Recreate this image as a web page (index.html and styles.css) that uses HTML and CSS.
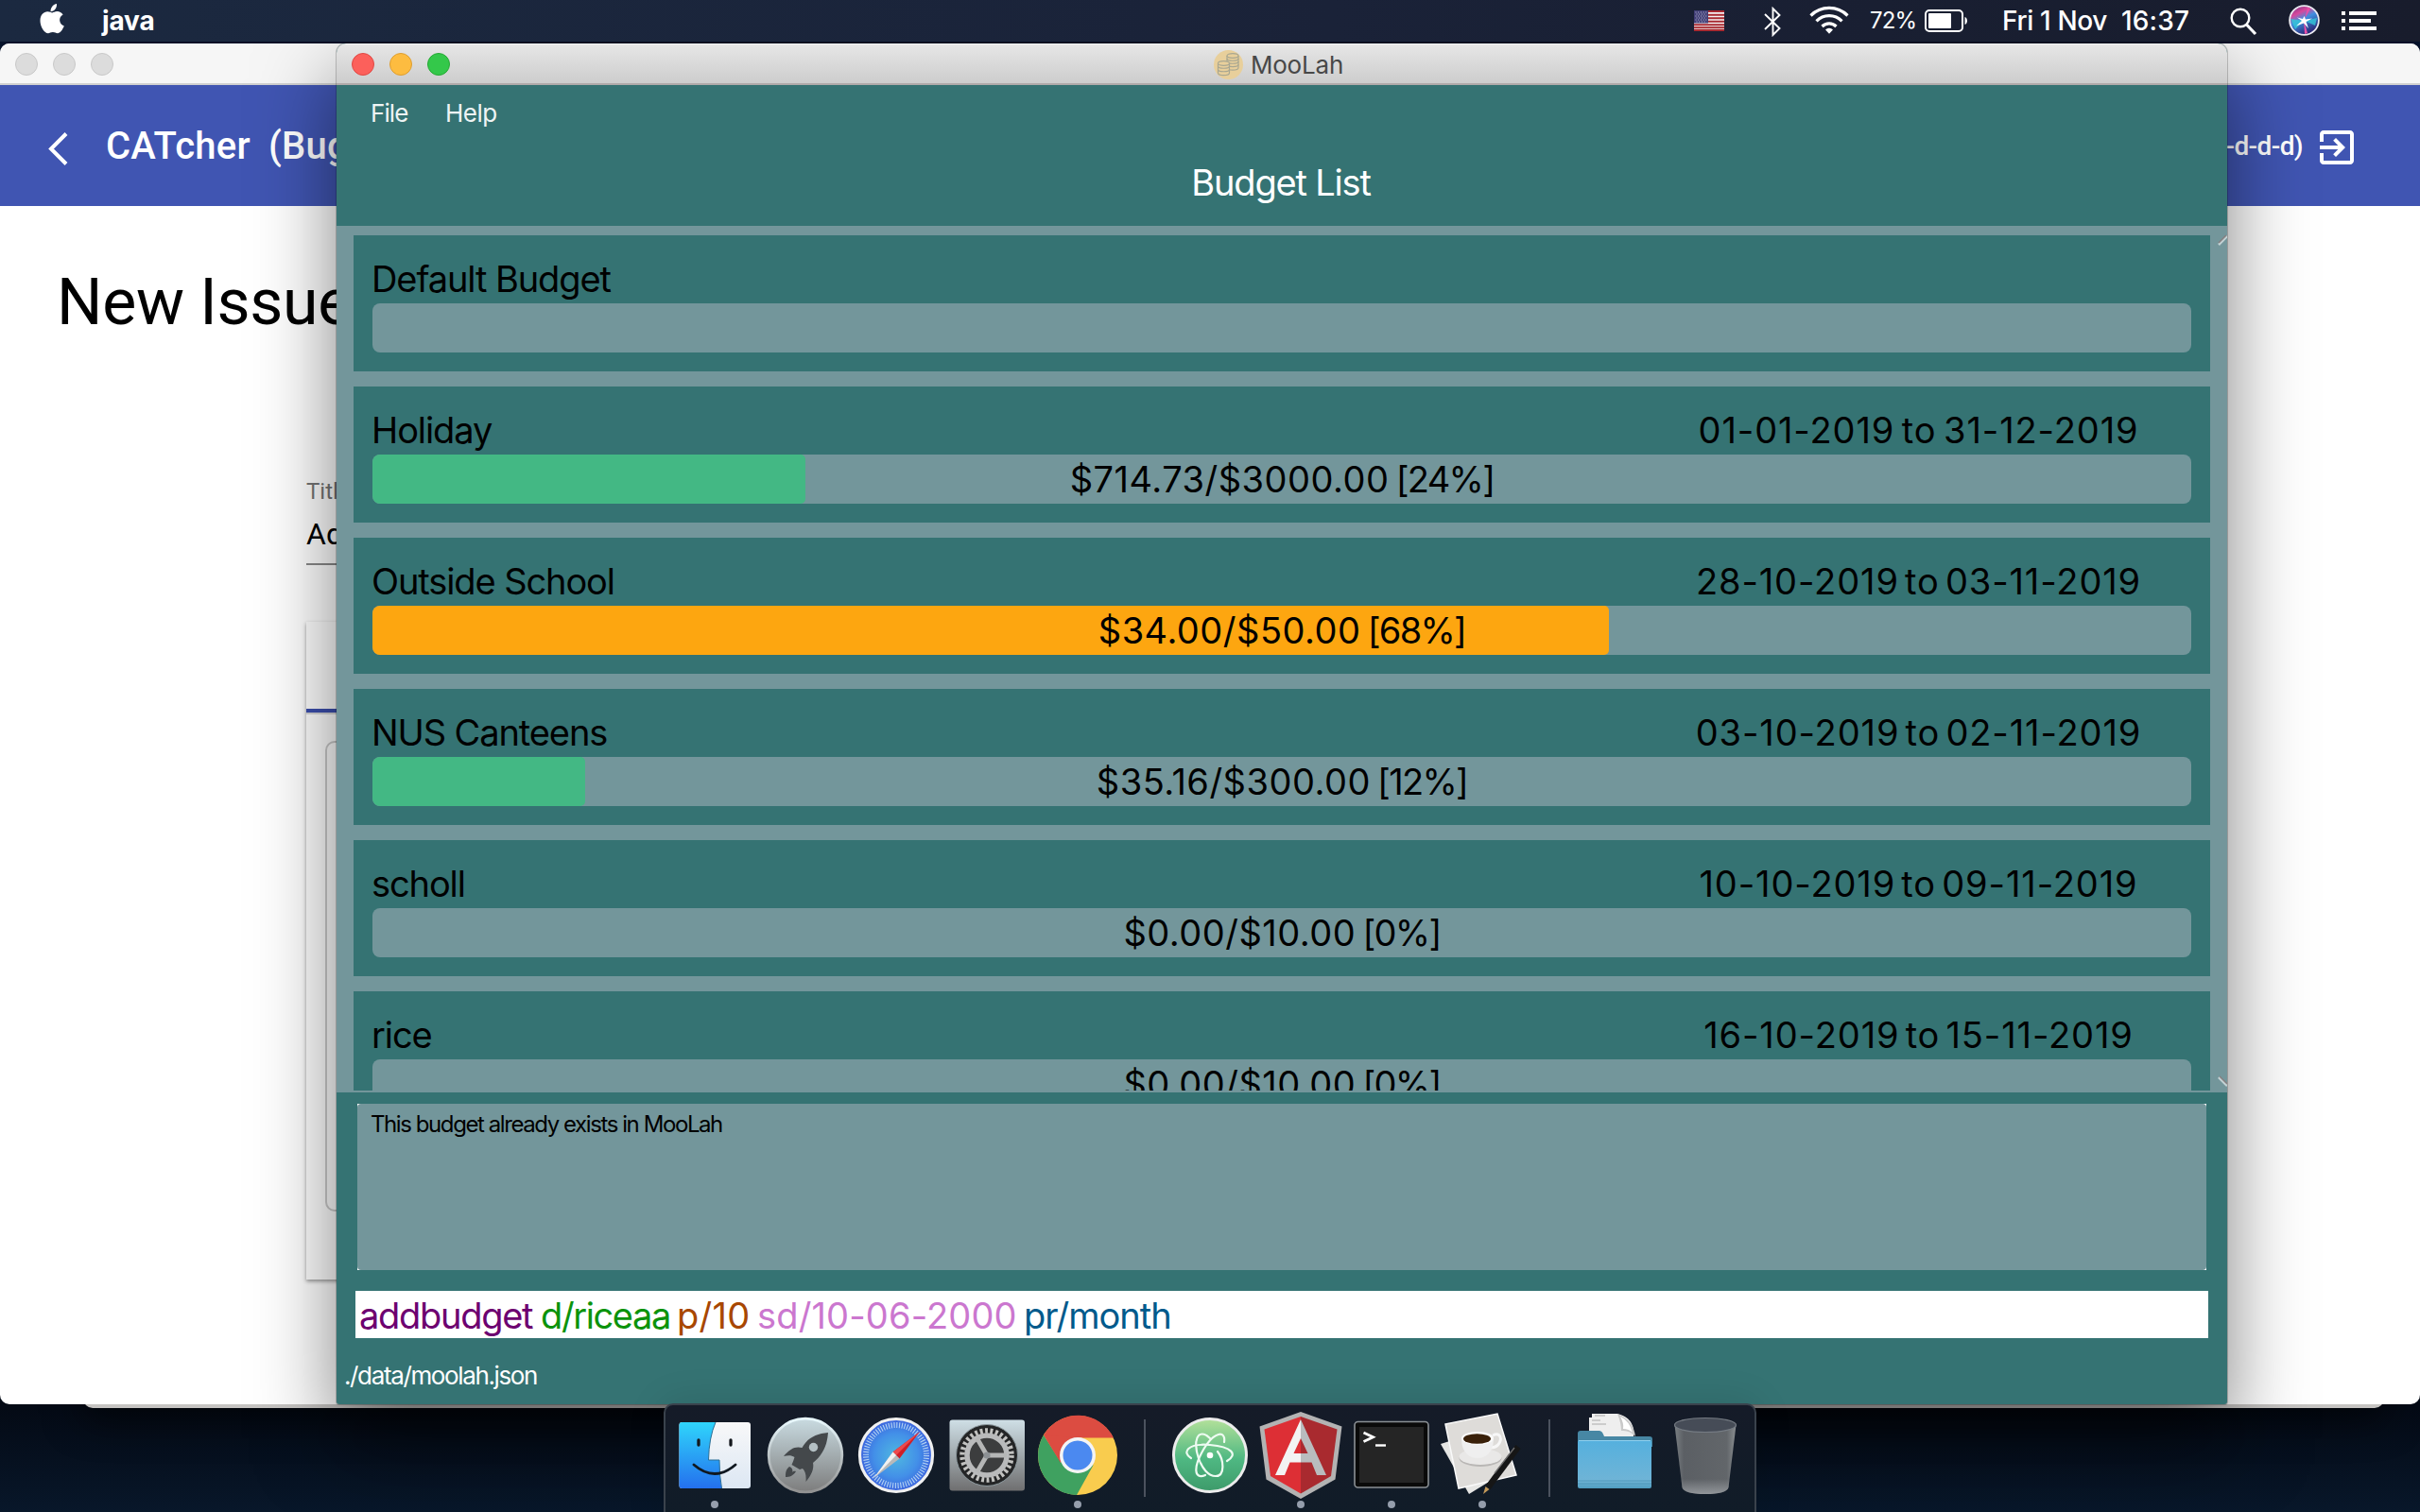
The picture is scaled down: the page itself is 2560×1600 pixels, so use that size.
FILE: index.html
```html
<!DOCTYPE html>
<html lang="en">
<head>
<meta charset="utf-8">
<title>MooLah</title>
<link rel="stylesheet" href="styles.css">
</head>
<body>
<div class="desktop">
  <header class="menubar">
    <svg class="apple" width="26" height="32" viewBox="0 0 26 32"><path fill="#fff" d="M18 0c.3 2.600-.7 4.700-1.900 6.100-1.200 1.400-3 2.300-4.500 2.200-.3-2.300.8-4.500 1.900-5.800C14.700 1.100 16.600.2 18 0zM13.300 9.400c1.200 0 2.700-1.300 5.100-1.300 2.500 0 4.900 1.200 6.200 3.400-5.200 3-4.300 9.800 1.200 12.100-.8 2.200-3.500 7.600-6.700 7.600-2 0-2.900-1.200-5.200-1.200-2.400 0-3.300 1.200-5 1.200C5 31.200.5 24 .5 17.900c0-6.200 3.900-9.600 7.800-9.600 2.100 0 3.900 1.100 5 1.100z"/></svg>
    <span class="app-name">java</span>
    <div class="tray">
      <svg class="flag" width="32" height="22" viewBox="0 0 32 22"><rect width="32" height="22" fill="#f4f2f2"/><path stroke="#a82a31" stroke-width="1.900" d="M0 1h32M0 4.700h32M0 8.200h32M0 11.700h32M0 15.200h32M0 18.300h32M0 21h32"/><rect width="15" height="13.500" fill="#3f3d75"/><path stroke="#c9c9dd" stroke-width="1" stroke-dasharray="1 1.700" d="M1.500 2h12M2.500 4h11M1.500 6h12M2.500 8h11M1.500 10h12M2.500 12h11"/></svg>
      <svg class="bt" width="18" height="32" viewBox="0 0 18 32"><path fill="none" stroke="#fff" stroke-width="1.900" d="M1 8l15.500 15L9.500 30V2l7 7L1 24"/></svg>
      <svg class="wifi" width="42" height="30" viewBox="0 0 42 30"><g fill="none" stroke="#fff" stroke-width="3.200"><path d="M1.500 10.500a27.500 27.500 0 0 1 39 0"/><path d="M7.500 16.300a19 19 0 0 1 27 0"/><path d="M13.500 22a10.600 10.600 0 0 1 15 0"/></g><path fill="#fff" d="M17 25.500a5.600 5.600 0 0 1 8 0L21 29.700z"/></svg>
      <span class="percent">72%</span>
      <svg class="battery" width="46" height="24" viewBox="0 0 46 24"><rect x="1" y="1" width="39" height="22" rx="4" fill="none" stroke="#fff" stroke-width="2"/><rect x="4" y="4" width="24" height="16" rx="1" fill="#fff"/><path fill="#fff" d="M42.500 8c3.300 1 3.300 7 0 8z"/></svg>
      <span class="date">Fri 1 Nov</span>
      <span class="time">16:37</span>
      <svg class="search" width="29" height="30" viewBox="0 0 29 30"><circle cx="11" cy="11" r="9.300" fill="none" stroke="#fff" stroke-width="2.400"/><path d="M17.500 18l9.500 10" stroke="#fff" stroke-width="3.200"/></svg>
      <svg class="siri" width="33" height="33" viewBox="0 0 33 33"><defs><linearGradient id="siri" x1="0" y1="0" x2=".5" y2="1"><stop offset="0" stop-color="#5a3180"/><stop offset=".32" stop-color="#d8479c"/><stop offset=".55" stop-color="#3f8ee0"/><stop offset="1" stop-color="#2b2a78"/></linearGradient></defs><circle cx="16.500" cy="16.500" r="15.400" fill="url(#siri)" stroke="#e9e9f0" stroke-width="1.800"/><path fill="#33c8d8" opacity=".8" d="M2 15l14 2-9 9zM17 17l13-3-2 8z"/><path fill="#e94fa8" d="M16 16l4 14-3 1zM17 15l3-12 3 1z"/><path fill="#fff" d="M16.500 12l1.500 3.500 7-1-6.500 3.500 2.500 7-5-5.500-8 3 6-5.500-5-3.500 6 1.500z"/></svg>
      <svg class="list-icon" width="37" height="20" viewBox="0 0 37 20"><path fill="#fff" d="M0 0h4v4H0zM8 0h29v4H8zM0 8h4v4H0zM8 8h23v4H8zM0 16h4v4H0zM8 16h29v4H8z"/></svg>
    </div>
  </header>

  <div class="window window-back"></div>

  <section class="window window-catcher">
    <div class="catcher-titlebar"><i></i><i></i><i></i></div>
    <div class="catcher-toolbar">
      <svg class="back" width="22" height="36" viewBox="0 0 22 36"><path d="M20 1.500L4 17.500l16 16" fill="none" stroke="#fff" stroke-width="4"/></svg>
      <span class="brand">CATcher</span>
      <span class="phase">(Bug Reporting)</span>
      <span class="user">-d-d-d)</span>
      <svg class="exit" width="36" height="36" viewBox="3 3 18 18"><path fill="#fff" d="M10.090 15.590L11.500 17l5-5-5-5-1.410 1.410L12.670 11H3v2h9.670l-2.580 2.590zM19 3H5c-1.110 0-2 .9-2 2v4h2V5h14v14H5v-4H3v4c0 1.100.89 2 2 2h14c1.100 0 2-.9 2-2V5c0-1.100-.9-2-2-2z"/></svg>
    </div>
    <div class="catcher-body">
      <h1 class="issue-heading">New Issue</h1>
      <div class="issue-form">
        <div class="field-label">Title</div>
        <div class="field-value">Add</div>
        <div class="issue-card">
          <div class="tabs"></div>
          <div class="editor"></div>
        </div>
      </div>
    </div>
  </section>

  <main class="window moolah">
    <div class="titlebar">
      <div class="lights"><i class="red"></i><i class="yellow"></i><i class="green"></i></div>
      <svg class="coins" width="31" height="31" viewBox="0 0 31 31"><circle cx="15.500" cy="15.500" r="15.500" fill="#e8cf9b"/><g fill="#e8cf9b" stroke="#a9a791" stroke-width="1.200"><path d="M14 6v12.500c0 3.500 12 3.500 12 0V6"/><ellipse cx="20" cy="6" rx="6" ry="2.300"/><path fill="none" d="M14 9c0 3 12 3 12 0M14 12c0 3 12 3 12 0M14 15.300c0 3 12 3 12 0"/><path d="M4.500 14v10c0 3.500 12 3.500 12 0V14"/><ellipse cx="10.500" cy="14" rx="6" ry="2.300"/><path fill="none" d="M4.500 17c0 3 12 3 12 0M4.500 20.500c0 3 12 3 12 0"/></g></svg>
      <span class="window-title">MooLah</span>
    </div>
    <nav class="menu"><span class="menu-file">File</span><span class="menu-help">Help</span></nav>
    <h2 class="panel-title">Budget List</h2>
    <div class="list">
      <div class="card"><div class="row"><span class="name">Default Budget</span></div><div class="bar"></div></div>
      <div class="card"><div class="row"><span class="name">Holiday</span><span class="period p1">01-01-2019 to 31-12-2019</span></div><div class="bar"><div class="fill ok" style="width:23.824%"></div><span class="amount">$714.73/$3000.00 <span class="pct">[24%]</span></span></div></div>
      <div class="card"><div class="row"><span class="name">Outside School</span><span class="period">28-10-2019 to 03-11-2019</span></div><div class="bar"><div class="fill warn" style="width:68%"></div><span class="amount">$34.00/$50.00 <span class="pct">[68%]</span></span></div></div>
      <div class="card"><div class="row"><span class="name">NUS Canteens</span><span class="period">03-10-2019 to 02-11-2019</span></div><div class="bar"><div class="fill ok" style="width:11.72%"></div><span class="amount">$35.16/$300.00 <span class="pct">[12%]</span></span></div></div>
      <div class="card"><div class="row"><span class="name">scholl</span><span class="period">10-10-2019 to 09-11-2019</span></div><div class="bar"><span class="amount">$0.00/$10.00 <span class="pct">[0%]</span></span></div></div>
      <div class="card"><div class="row"><span class="name">rice</span><span class="period">16-10-2019 to 15-11-2019</span></div><div class="bar"><span class="amount">$0.00/$10.00 <span class="pct">[0%]</span></span></div></div>
      <svg class="arrow arrow-up" width="10" height="12" viewBox="0 0 10 12"><path d="M1 11l9-9" stroke="#c3d2d4" stroke-width="2.500"/><path d="M1 9l8-8" stroke="#857f80" stroke-width="1.500"/></svg>
      <svg class="arrow arrow-down" width="10" height="12" viewBox="0 0 10 12"><path d="M1 2l9 9" stroke="#c3d2d4" stroke-width="2.500"/><path d="M2 1l8 8" stroke="#857f80" stroke-width="1.500"/></svg>
    </div>
    <div class="result"><div class="result-text">This budget already exists in MooLah</div></div>
    <div class="command"><span class="c-word">addbudget</span> <span class="c-desc">d/riceaa</span> <span class="c-price">p/10</span> <span class="c-start">sd/10-06-2000</span> <span class="c-period">pr/month</span></div>
    <footer class="status">./data/moolah.json</footer>
  </main>

  <div class="dock">
    <div class="slot running"><svg width="96" height="115" viewBox="0 0 96 115"><defs><linearGradient id="fb" x1="0" y1="0" x2="0" y2="1"><stop offset="0" stop-color="#2fd5fb"/><stop offset="1" stop-color="#2470ee"/></linearGradient><linearGradient id="fw" x1="0" y1="0" x2="0" y2="1"><stop offset="0" stop-color="#f8f8f9"/><stop offset="1" stop-color="#dce7f3"/></linearGradient></defs><rect x="10.500" y="20" width="75.500" height="70" rx="3" fill="url(#fw)"/><path fill="url(#fb)" d="M13.500 20H49q-7 16-7.500 40H53q0 17 2.500 30H13.500q-3 0-3-3V23q0-3 3-3z"/><path d="M49 20q-7 16-7.500 40H53q0 17 2.500 30" fill="none" stroke="#2b6f96" stroke-width="1"/><path d="M31 39v5M65 39v5" stroke="#14181d" stroke-width="3.300" stroke-linecap="round"/><path d="M26 65q22 19 44 0" fill="none" stroke="#101820" stroke-width="2.800" stroke-linecap="round"/></svg></div>
    <div class="slot"><svg width="96" height="115" viewBox="0 0 96 115"><defs><linearGradient id="lp" x1="0" y1="0" x2="0" y2="1"><stop offset="0" stop-color="#c9dbe1"/><stop offset="1" stop-color="#7d7d7d"/></linearGradient><linearGradient id="lpr" x1="0" y1="0" x2="0" y2="1"><stop offset="0" stop-color="#e9f9fe"/><stop offset="1" stop-color="#929292"/></linearGradient></defs><circle cx="48" cy="55" r="38.800" fill="url(#lp)" stroke="url(#lpr)" stroke-width="2.800"/><path fill="#44484b" d="M72 31c-13 1-22 6-27.500 16-7-2-13 1-19.500 9 5-1 8.500-1 11.500 1-1 3-2 6-3 8l8.500 5 3-1c3 3 4 7 3.500 14 5-6 9-13 7.500-20C66 55 71 45 72 31z"/><path fill="#44484b" d="M31 67c-4 3-4 7-4 11 4 0 8-1 11-6-2-.5-3 0-4 1 1-2 0-5-3-6z"/><circle cx="56.500" cy="46.500" r="4.700" fill="#b4c0c4"/></svg></div>
    <div class="slot"><svg width="96" height="115" viewBox="0 0 96 115"><defs><radialGradient id="sf"><stop offset="0" stop-color="#4fb8e0"/><stop offset=".6" stop-color="#4390e8"/><stop offset="1" stop-color="#3b63dd"/></radialGradient></defs><circle cx="48" cy="55" r="38.500" fill="url(#sf)" stroke="#f0f0f0" stroke-width="3.200"/><circle cx="48" cy="55" r="32" fill="none" stroke="#b5d2f3" stroke-width="6" stroke-dasharray="1.100 1.693"/><path fill="#d01f28" d="M73 30L44.500 51.500l7 7z"/><path fill="#ec4a4d" d="M73 30L44.500 51.500l3.500 3.500z"/><path fill="#b9b9b9" d="M24.500 79L44.500 51.500l7 7z"/><path fill="#f1f1f1" d="M24.500 79L44.500 51.500l3.500 3.500z"/></svg></div>
    <div class="slot"><svg width="96" height="115" viewBox="0 0 96 115"><defs><linearGradient id="sp" x1="0" y1="0" x2="0" y2="1"><stop offset="0" stop-color="#cfdfe6"/><stop offset="1" stop-color="#6f6f70"/></linearGradient></defs><rect x="8.500" y="17.500" width="79.500" height="75" rx="3" fill="url(#sp)"/><circle cx="48" cy="55" r="32.500" fill="#242526" stroke="#8d999e" stroke-width="1"/><circle cx="48" cy="55" r="26" fill="none" stroke="#c2c2c0" stroke-width="5.500" stroke-dasharray="2.900 2.545"/><circle cx="48" cy="55" r="21" fill="#3c3d3e" stroke="#b9babb" stroke-width="5.500"/><g stroke="#b5b6b6" stroke-width="4.800"><path d="M48 55h21M48 55L37.500 37M48 55L37.500 73"/></g><circle cx="48" cy="55" r="3.600" fill="#8c9094"/></svg></div>
    <div class="slot running"><svg width="96" height="115" viewBox="0 0 96 115"><circle cx="48" cy="55" r="42" fill="#f9cc4e"/><path fill="#dc4c41" d="M48 55L12 33.500A42 42 0 0 1 86 36.500H48z"/><path fill="#3fa160" d="M12 33.500A42 42 0 0 0 47 97l17.500-31.500L48 55 30 62z"/><path fill="#dc4c41" d="M12 33.500L30 63l14-27z"/><circle cx="48" cy="55" r="19" fill="#f4f4f4"/><circle cx="48" cy="55" r="15.500" fill="#4b89f0"/></svg></div>
    <div class="divider"></div>
    <div class="slot"><svg width="96" height="115" viewBox="0 0 96 115"><defs><linearGradient id="at" x1="0" y1="0" x2="0" y2="1"><stop offset="0" stop-color="#b4e19a"/><stop offset=".55" stop-color="#4fb882"/><stop offset="1" stop-color="#3d9a6a"/></linearGradient></defs><circle cx="48" cy="55" r="38.500" fill="url(#at)" stroke="#ececec" stroke-width="3"/><g fill="none" stroke="#eefbf2" stroke-width="2.200" stroke-linecap="round"><path d="M66 61c12-7 5-15-18-17-24-2-30 8-20 14"/><path d="M43 76c-12 5-13-8-2-27 11-19 24-21 22-8"/><path d="M36 34c-8 8 2 43 18 43 10 0 9-17 2-26M36 34c3-3 8-1 12 3"/></g><circle cx="48" cy="55" r="3.300" fill="#fff"/></svg></div>
    <div class="slot running"><svg width="96" height="115" viewBox="0 0 96 115"><path fill="#b3b3b3" d="M48 9l43.500 15.500-7 56L48 101 11.500 80.500l-7-56z"/><path fill="#dd2f35" d="M48 14L9.500 27.500 16 77l32 18.500z"/><path fill="#a92a2f" d="M48 14l38.500 13.500L80 77 48 95.500z"/><path fill="#f3f3f3" d="M48 17L21 76h10l5.500-13.500H48V53h-7.500L48 37z"/><path fill="#b9bcbe" d="M48 17l27 59H65l-5.500-13.500H48V53h7.500L48 37z"/></svg></div>
    <div class="slot running"><svg width="96" height="115" viewBox="0 0 96 115"><rect x="9" y="19.500" width="78" height="69.500" rx="3.500" fill="#0a0a0a" stroke="#8b9094" stroke-width="1.600"/><rect x="14" y="25" width="68" height="59" fill="#252525"/><path d="M18.500 31l10 4.800-10 4.800" fill="none" stroke="#fff" stroke-width="2.800"/><path d="M31 44.500h11" stroke="#fff" stroke-width="2.400"/></svg></div>
    <div class="slot running"><svg width="96" height="115" viewBox="0 0 96 115"><path fill="#e6e6e4" d="M4 43l25-8 31 45-26 16z"/><path fill="#dedcd9" stroke="#fafafa" stroke-width="1.500" d="M9 22l55-11 20 65-61 14z"/><ellipse cx="46" cy="58" rx="22.500" ry="9" fill="#b9b7b5"/><ellipse cx="46" cy="56.500" rx="22.500" ry="8.500" fill="#e9e8e7"/><path d="M59 34c12-6 11 13-2 13" fill="none" stroke="#f7f7f7" stroke-width="3"/><path fill="#efefef" d="M26 37c0 15 8 21 17 21s17-6 17-21z"/><ellipse cx="43" cy="37" rx="17" ry="7" fill="#fbfbfb"/><ellipse cx="42.500" cy="37.500" rx="14.500" ry="5.300" fill="#3a210a"/><path d="M86 46L54 89" stroke="#161616" stroke-width="6.500"/><path d="M82 47L61 74" stroke="#707070" stroke-width="1.300"/><path fill="#c49a5a" d="M51.500 88l4 3-6.500 5z"/></svg></div>
    <div class="divider"></div>
    <div class="slot"><svg width="96" height="115" viewBox="0 0 96 115"><defs><linearGradient id="fo" x1="0" y1="0" x2="0" y2="1"><stop offset="0" stop-color="#55b0de"/><stop offset=".85" stop-color="#6fb4d6"/><stop offset="1" stop-color="#4f9cc0"/></linearGradient></defs><path fill="#eeeeee" d="M24 11h27q14 3 17 16v12H21V15h3z"/><path fill="#c9c9c9" d="M51 11q4 10 4 18 9-1 15 6-2-17-19-24z"/><path fill="#fff" d="M54 14q4 7 3 13 6 0 10 4-3-12-13-17z"/><path d="M27 13h11M24 18h9M24 22h15" stroke="#aaa" stroke-width="1"/><path fill="#4787a4" d="M12 29h20q3 0 5 6h48q3 0 3 3v8H9V32q0-3 3-3z"/><rect x="9" y="39" width="78" height="51" rx="2" fill="url(#fo)"/><path d="M10 39.500h76" stroke="#8fd1f0" stroke-width="1.200"/><path d="M9 82h78M9 85h78" stroke="#4a93b5" stroke-width=".8"/></svg></div>
    <div class="slot"><svg width="96" height="115" viewBox="0 0 96 115"><defs><linearGradient id="tr" x1="0" y1="0" x2="1" y2="0"><stop offset="0" stop-color="#7b8084"/><stop offset=".15" stop-color="#5b5f64"/><stop offset=".85" stop-color="#62666a"/><stop offset="1" stop-color="#8a8e91"/></linearGradient><linearGradient id="tb" x1="0" y1="0" x2="0" y2="1"><stop offset="0" stop-color="#92969a" stop-opacity="0"/><stop offset="1" stop-color="#92969a"/></linearGradient></defs><path fill="url(#tr)" d="M15.500 23l8 66q2 7 24.500 7t24.500-7l8-66z"/><path fill="url(#tb)" d="M22.500 80h51l-1 9q-2 7-24.500 7t-24.500-7z"/><ellipse cx="48" cy="23" rx="32.500" ry="7.500" fill="#464c57" stroke="#757b83" stroke-width="1.200"/></svg></div>
  </div>
</div>
</body>
</html>
```
FILE: styles.css
```css
* { box-sizing: border-box; }
body { margin: 0; font-family: Inter, "Liberation Sans", sans-serif; }
svg { display: block; flex: none; }
h1, h2 { margin: 0; font-weight: 400; }

.desktop { position: relative; width: 2560px; height: 1600px; overflow: hidden; background: linear-gradient(#06122a 0, #06122a 100px, #040a15 1490px, #08172a 1600px); }

/* menu bar */
.menubar { position: relative; z-index: 5; display: flex; align-items: flex-start; height: 44px; padding: 0 46px 0 42px; background: linear-gradient(90deg, #1b2940, #1a2238 55%, #181c2c); color: #fff; white-space: nowrap; }
.apple { margin-top: 4px; }
.app-name { margin-left: 40px; font-size: 28px; font-weight: 700; line-height: 44px; letter-spacing: -.13px; }
.tray { display: flex; margin-left: auto; font-size: 28px; line-height: 44px; }
.flag { margin: 11px 42px 0 0; }
.bt { margin: 7px 30px 0 0; }
.wifi { margin: 6px 22px 0 0; }
.percent { width: 50px; margin-right: 8px; font-size: 24px; letter-spacing: -.8px; }
.battery { margin: 10px 36px 0 0; }
.date { width: 112px; margin-right: 14px; font-weight: 500; letter-spacing: -.35px; }
.time { width: 73px; margin-right: 42px; font-weight: 500; letter-spacing: .17px; }
.search { margin: 8px 33px 0 0; }
.siri { margin: 5px 23px 0 0; }
.list-icon { margin-top: 12px; }

.window { position: absolute; overflow: hidden; }
.window-back { left: 88px; top: 60px; width: 2434px; height: 1430px; border-radius: 10px; background: #c6c4c2; box-shadow: 0 10px 40px rgba(0,0,0,.6); }

/* CATcher */
.window-catcher { left: 0; top: 46px; width: 2560px; height: 1440px; border-radius: 10px; background: #fff; font-family: Roboto, sans-serif; }
.catcher-titlebar { display: flex; gap: 16px; height: 44px; padding: 10px 16px; background: #f6f6f6; border-bottom: 2px solid #d0d0d0; }
.catcher-titlebar i { width: 24px; height: 24px; border-radius: 50%; background: #dcdcdc; border: 1px solid #c8c8c8; }
.catcher-toolbar { display: flex; align-items: flex-start; height: 128px; padding: 0 70px 0 50px; background: #4055b2; color: #fff; font-weight: 500; white-space: pre; }
.back { margin-top: 50px; }
.brand { width: 172px; margin-left: 40px; font-size: 40px; line-height: 130px; letter-spacing: .2px; }
.phase { font-size: 40px; line-height: 130px; letter-spacing: .2px; }
.user { margin-left: auto; font-size: 28px; line-height: 129px; letter-spacing: -.6px; }
.exit { margin: 48px 0 0 18px; }
.issue-heading { padding: 58px 0 0 60px; font-size: 68px; line-height: 88px; letter-spacing: -.3px; }
.issue-form { width: 1912px; margin: 140px 0 0 324px; }
.field-label { font-size: 24px; line-height: 32px; color: #757575; }
.field-value { padding-top: 6px; height: 62px; font-size: 32px; line-height: 46px; border-bottom: 2px solid #8a8a8a; }
.issue-card { height: 696px; margin-top: 60px; box-shadow: 0 2px 4px rgba(0,0,0,.4); }
.tabs { height: 98px; border-bottom: 2px solid #d8d8d8; background: linear-gradient(#3c4fae, #3c4fae) 0 100% / 320px 4px no-repeat; }
.editor { height: 498px; margin: 28px 20px 0; border: 2px solid #ccc; border-radius: 10px; }

/* MooLah */
.moolah { left: 356px; top: 46px; width: 2000px; height: 1440px; display: flex; flex-direction: column; border-radius: 10px 10px 3px 3px; background: #357373; box-shadow: 0 0 0 1px rgba(0,0,0,.2), 0 36px 84px rgba(0,0,0,.5); color: #000; white-space: nowrap; }
.titlebar { position: relative; flex: none; display: flex; justify-content: center; height: 44px; padding-right: 7px; background: linear-gradient(#e6e6e6, #cdcdcd); border-bottom: 2px solid #b0aaaa; border-top: 1px solid #f4f4f4; }
.lights { position: absolute; left: 16px; top: 9px; display: flex; gap: 16px; }
.lights i { width: 24px; height: 24px; border-radius: 50%; }
.red { background: #fc605b; border: 1px solid #df4843; }
.yellow { background: #fdbc40; border: 1px solid #dd9d30; }
.green { background: #34c84a; border: 1px solid #26a934; }
.coins { margin-top: 6px; }
.window-title { margin-left: 8px; font-size: 26px; line-height: 43px; letter-spacing: -.19px; color: #484848; }
.menu { flex: none; display: flex; height: 60px; padding-left: 36px; font-size: 26px; line-height: 60px; color: #eef4f4; }
.menu-file { width: 79px; letter-spacing: -.9px; }
.menu-help { letter-spacing: -.5px; }
.panel-title { flex: none; height: 89px; padding-right: 2px; font-size: 38px; line-height: 86px; letter-spacing: -1.19px; text-align: center; color: #fff; }

.list { position: relative; flex: none; display: flex; flex-direction: column; gap: 16px; height: 917px; padding: 10px 18px 0; overflow: hidden; background: #73969b; border-bottom: 2px solid #73969b; font-size: 38px; }
.card { flex: none; height: 144px; padding: 20px 20px 0; background: #357373; }
.row { display: flex; justify-content: space-between; height: 52px; line-height: 52px; }
.name { letter-spacing: -1.1px; margin-left: -1px; }
.period { width: 577px; text-align: center; letter-spacing: .9px; word-spacing: -5.4px; }
.period.p1 { word-spacing: -4px; }
.bar { display: grid; height: 52px; border-radius: 8px; background: #73969b; overflow: hidden; }
.bar > * { grid-area: 1 / 1; }
.fill { height: 52px; border-radius: 5px; }
.ok { background: #43b884; }
.warn { background: #fda610; }
.amount { line-height: 52px; text-align: center; letter-spacing: .5px; word-spacing: -4px; }
.pct { letter-spacing: -1.7px; }
.arrow { position: absolute; right: 0; }
.arrow-up { top: 9px; }
.arrow-down { top: 899px; }

.result { flex: none; height: 176px; margin: 12px 22px 0; background: #fff; }
.result-text { height: 176px; padding: 8px 14px; border-radius: 4px; background: #73969b; font-size: 24px; line-height: 28px; letter-spacing: -1.42px; }
.command { flex: none; display: grid; grid-template-columns: 192px 144px 85px 282px auto; height: 50px; margin: 22px 20px 0; padding-left: 4px; background: #fff; font-size: 38px; line-height: 52px; }
.c-word { color: #6d0070; letter-spacing: -1.29px; }
.c-desc { color: #0c930c; letter-spacing: -1.38px; }
.c-price { color: #a84700; letter-spacing: .3px; }
.c-start { color: #cb77cf; letter-spacing: .15px; }
.c-period { color: #005a8c; letter-spacing: -.95px; }
.status { padding: 9px 0 0 8px; font-size: 26px; line-height: 62px; letter-spacing: -1.37px; color: #fff; }

/* dock */
.dock { position: absolute; z-index: 6; left: 702px; top: 1485px; width: 1156px; height: 130px; padding-left: 4px; display: flex; background: linear-gradient(#151b28, #101c28); border: 2px solid #3a424c; border-radius: 10px 10px 0 0; box-shadow: 0 0 40px rgba(0,0,0,.12); }
.slot { position: relative; width: 96px; height: 115px; margin-top: -2px; }
.running::after { content: ""; position: absolute; left: 44px; top: 103px; width: 8px; height: 8px; border-radius: 50%; background: #959eac; }
.divider { width: 2px; height: 82px; margin: 15px 20px 0 22px; background: #4b525e; }
```
